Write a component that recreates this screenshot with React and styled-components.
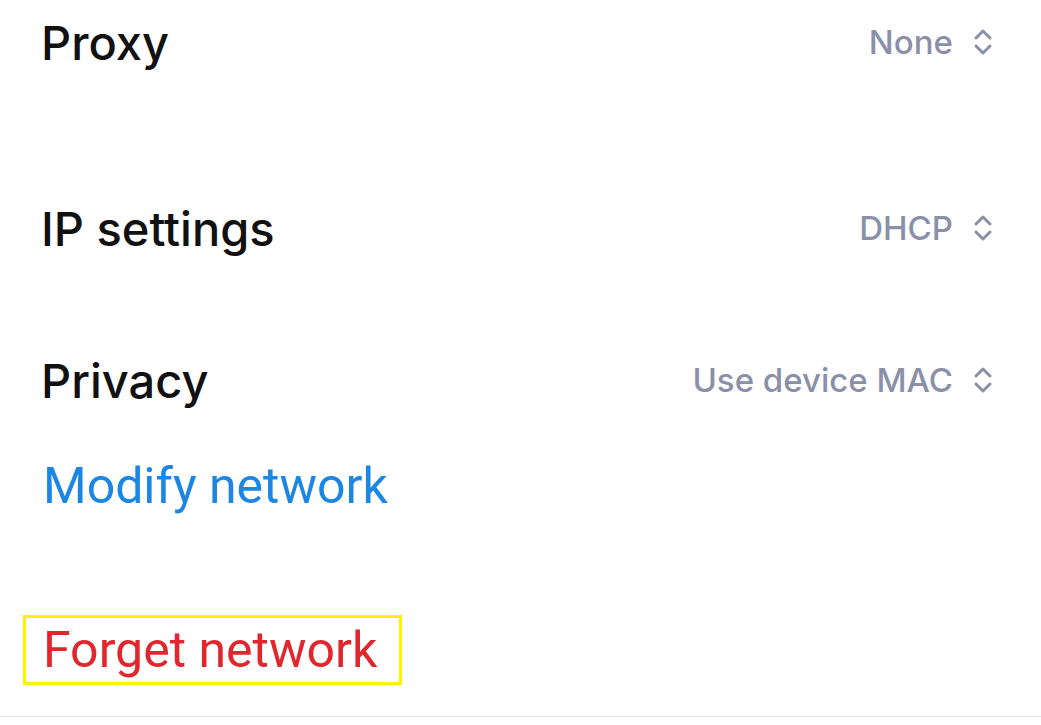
import React from "react";
import styled, { createGlobalStyle } from "styled-components";

const Global = createGlobalStyle`
  html, body { margin: 0; padding: 0; background: #ffffff; }
  body { width: 1041px; height: 725px; overflow: hidden; }
`;

const Page = styled.div`
  width: 1041px;
  height: 725px;
  box-sizing: border-box;
  display: flex;
  flex-direction: column;
  background: #fff;
  position: relative;
`;

const Row = styled.div`
  display: flex;
  align-items: center;
  justify-content: space-between;
  height: 84px;
  padding: 0 48px 0 41px;
  margin-top: ${(p) => p.$top || 0}px;
`;

const Title = styled.div`
  font-family: Inter, "Liberation Sans", sans-serif;
  font-weight: 500;
  font-size: 47px;
  color: #111;
  letter-spacing: 0;
`;

const Value = styled.div`
  display: flex;
  align-items: center;
  gap: 20px;
  font-family: Inter, Roboto, sans-serif;
  font-weight: 500;
  font-size: 33px;
  color: #8b90a9;
`;

const Action = styled.div`
  font-family: Roboto, "Noto Sans", sans-serif;
  font-size: 50px;
  line-height: 60px;
  color: ${(p) => p.$color};
`;

const ActionRow = styled.div`
  display: flex;
  padding-left: ${(p) => p.$left}px;
  margin-top: ${(p) => p.$top}px;
`;

const Highlight = styled.div`
  display: flex;
  align-items: center;
  height: 70px;
  box-sizing: border-box;
  border: 3px solid #fff200;
  padding: 0 22px 0 17px;
`;

const Divider = styled.div`
  position: absolute;
  left: 0;
  right: 0;
  top: 716px;
  height: 1px;
  background: #e4e4e4;
`;

const Chevrons = () => (
  <svg width="20" height="28" viewBox="0 0 20 28" fill="none">
    <path d="M3 10 L10 3 L17 10" stroke="#8b90a9" strokeWidth="3" strokeLinecap="round" strokeLinejoin="round" />
    <path d="M3 18 L10 25 L17 18" stroke="#8b90a9" strokeWidth="3" strokeLinecap="round" strokeLinejoin="round" />
  </svg>
);

const SettingRow = ({ title, value, top }) => (
  <Row $top={top}>
    <Title>{title}</Title>
    <Value>
      {value}
      <Chevrons />
    </Value>
  </Row>
);

export default function App() {
  return (
    <>
      <Global />
      <Page>
        <SettingRow title="Proxy" value="None" top={0} />
        <SettingRow title="IP settings" value="DHCP" top={102} />
        <SettingRow title="Privacy" value="Use device MAC" top={68} />
        <ActionRow $left={43} $top={34}>
          <Action $color="#1b86e3">Modify network</Action>
        </ActionRow>
        <ActionRow $left={23} $top={99}>
          <Highlight>
            <Action $color="#e1262d">Forget network</Action>
          </Highlight>
        </ActionRow>
        <Divider />
      </Page>
    </>
  );
}
